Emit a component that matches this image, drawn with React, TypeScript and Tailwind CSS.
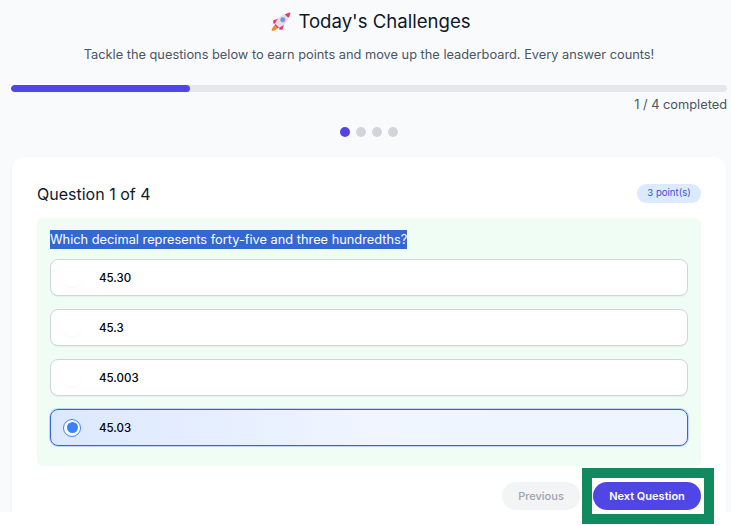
import { ReactNode } from 'react';

const options = ['45.30', '45.3', '45.003', '45.03'];

function Rocket() {
  return (
    <svg width="20" height="20" viewBox="0 0 20 20" className="ml-[4px] shrink-0">
      {/* flame */}
      <path d="M3.4 13.4 C1.8 14.4 0.8 16.6 0.6 19 C3 18.8 5.2 17.8 6.4 16.2 Z" fill="#f78c2f" />
      {/* fins */}
      <path d="M7 6.6 L2.2 8.4 L2.2 11.6 L5.8 11.8 Z" fill="#f0336f" />
      <path d="M13 12.6 L11.4 17.8 L8.4 17.8 L8.2 14.2 Z" fill="#f0336f" />
      {/* body */}
      <path d="M4 12.2 C5.4 7 10 2.8 15.2 2 L17.6 4.4 C16.8 9.8 13 14 7.6 15.8 Z" fill="#e4dce8" />
      <path d="M4.4 12 L7.8 15.6 L6.6 16.6 L3.4 13.2 Z" fill="#f0336f" />
      <path d="M13.8 2.4 C15.6 1.2 17.4 0.6 19.4 0.4 C19.2 2.4 18.6 4.2 17.4 5.8 Z" fill="#f0336f" />
      <circle cx="11.8" cy="7.8" r="2.3" fill="#5f97ee" />
      <circle cx="11.8" cy="7.8" r="2.3" fill="none" stroke="#a999bd" strokeWidth="0.7" />
    </svg>
  );
}

function Option({ label, selected }: { label: string; selected?: boolean }) {
  return (
    <div
      className={
        selected
          ? 'flex h-[37px] items-center rounded-lg border border-[#2f66dc] bg-gradient-to-r from-[#dbe8fe] via-[#f0f5ff] to-[#eef5ff] pl-[12px] shadow-[0_0_0_1px_#bfd7fb]'
          : 'flex h-[37px] items-center rounded-lg border border-[#d1d5db] bg-white pl-[12px] shadow-[0_1px_1px_rgba(0,0,0,0.05)]'
      }
    >
      <span
        className={
          selected
            ? 'flex h-[18px] w-[18px] items-center justify-center rounded-full border border-[#3b82f6] bg-white'
            : 'flex h-[18px] w-[18px] items-center justify-center rounded-full bg-white shadow-[0_1px_2px_rgba(0,0,0,0.04)]'
        }
      >
        {selected && <span className="h-[11px] w-[11px] rounded-full bg-[#3b82f6]" />}
      </span>
      <span className="ml-[18px] pt-[3px] text-[11.5px] font-medium text-black">{label}</span>
    </div>
  );
}

function Badge({ children }: { children: ReactNode }) {
  return (
    <span className="flex h-[19px] w-[64px] items-center justify-center rounded-full bg-[#dbeafe] text-[9.6px] text-[#3b50d0]">
      {children}
    </span>
  );
}

export default function App() {
  return (
    <div className="relative h-[525px] w-[731px] overflow-hidden bg-white font-['Inter',sans-serif]">
      <div className="h-[512px] overflow-hidden bg-[#f9fafb] pl-[11px] pr-[4px]">
        {/* Header */}
        <div className="flex h-[85px] flex-col items-center">
          <h1 className="mt-[8px] flex h-[28px] items-center gap-[7px] text-[18.6px] font-normal text-[#0f172a]">
            <Rocket />
            Today's Challenges
          </h1>
          <p className="mt-[9px] text-[12.8px] leading-[20px] text-[#4b5563]">
            Tackle the questions below to earn points and move up the leaderboard. Every answer counts!
          </p>
        </div>

        {/* Progress */}
        <div className="h-[7px] w-[716px] overflow-hidden rounded-full bg-[#e5e7eb]">
          <div className="h-full w-1/4 rounded-full bg-[#4f46e5]" />
        </div>
        <div className="mt-[3px] text-right text-[12.8px] leading-[20px] text-[#4b5563]">1 / 4 completed</div>
        <div className="mt-[12px] flex justify-center gap-[6px]">
          <span className="h-[10px] w-[10px] rounded-full bg-[#4f46e5]" />
          <span className="h-[10px] w-[10px] rounded-full bg-[#d1d5db]" />
          <span className="h-[10px] w-[10px] rounded-full bg-[#d1d5db]" />
          <span className="h-[10px] w-[10px] rounded-full bg-[#d1d5db]" />
        </div>

        {/* Question card */}
        <div className="ml-px mt-[20px] h-[360px] w-[714px] rounded-t-xl bg-white px-[25px] pt-[27px] shadow-[0_1px_3px_rgba(0,0,0,0.04)]">
          <div className="flex h-[19px] items-center justify-between">
            <h2 className="text-[16px] font-normal text-[#0f172a]">Question 1 of 4</h2>
            <Badge>3 point(s)</Badge>
          </div>

          <div className="mt-[15px] h-[248px] rounded-md bg-[#f0fdf4] px-[13px] pt-[12px]">
            <p className="flex h-[19px]">
              <span className="bg-[#3367d1] text-[12.8px] font-normal leading-[19px] text-white">
                Which decimal represents forty-five and three hundredths?
              </span>
            </p>
            <div className="mt-[10px] flex flex-col gap-[13px]">
              {options.map((o) => (
                <Option key={o} label={o} selected={o === '45.03'} />
              ))}
            </div>
          </div>

          <div className="mt-[16px] flex justify-end gap-[13px]">
            <button className="h-[28px] w-[78px] rounded-full bg-[#f3f4f6] text-[11px] font-medium text-[#9ca3af]">
              Previous
            </button>
            <button className="h-[28px] w-[108px] rounded-full bg-[#4f46e5] text-[11px] font-semibold text-white">
              Next Question
            </button>
          </div>
        </div>
      </div>

      {/* Annotation box over the next button */}
      <div className="absolute left-[582px] top-[468px] h-[56px] w-[132px] border-[10px] border-[#128a60]" />
    </div>
  );
}
